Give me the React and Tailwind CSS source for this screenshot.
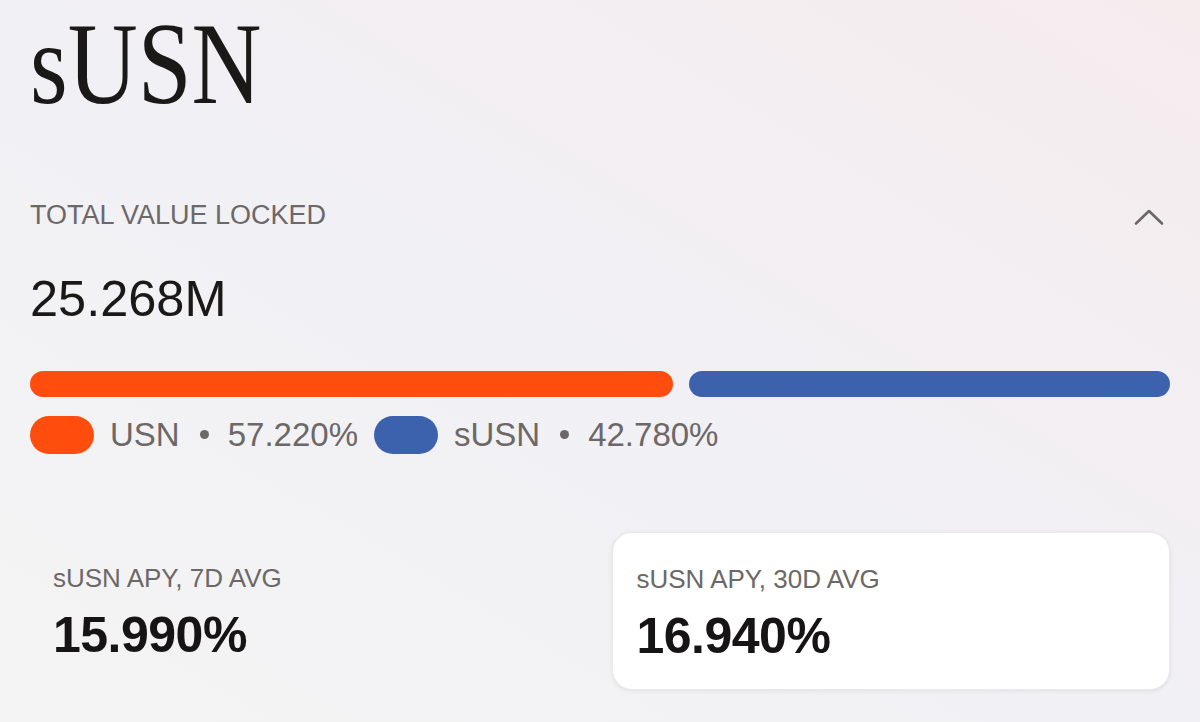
// App.jsx
import React from "react";

const sans = "font-['Liberation_Sans',Arial,sans-serif]";

const tvl = [
  { name: "USN", pct: 57.22, color: "bg-[#ff4d0d]" },
  { name: "sUSN", pct: 42.78, color: "bg-[#3d62ad]" },
];

function ChevronUp() {
  return (
    <svg width="30" height="18" viewBox="0 0 30 18" fill="none">
      <polyline
        points="2,15.5 15,3 28,15.5"
        stroke="#6a6767"
        strokeWidth="2.6"
        strokeLinecap="round"
        strokeLinejoin="round"
      />
    </svg>
  );
}

function Stat({ label, value, card }) {
  return (
    <div
      className={
        card
          ? "rounded-[20px] bg-white px-6 pt-[33px] pb-[28px] shadow-[0_1px_4px_rgba(0,0,0,0.08)] border border-[#ebe9ec]"
          : "px-[23px] pt-[33px] pb-[28px]"
      }
    >
      <p className="text-[26px] leading-none text-[#6c6868]">{label}</p>
      <p className="mt-[19px] text-[50px] leading-none font-bold text-[#161414] tracking-[-0.01em]">
        {value}
      </p>
    </div>
  );
}

export default function App() {
  return (
    <div
      className={`min-h-[722px] w-full bg-linear-to-bl from-[#f5ecee] via-[#f1f0f4] to-[#f4f4f4] px-[30px] ${sans}`}
    >
      {/* Title */}
      <h1 className="pt-[1px] h-[130px] font-['Liberation_Serif',serif] text-[116px] leading-[1.1] text-[#1b1918]">
        <span className="inline-block origin-left scale-x-[0.835]">sUSN</span>
      </h1>

      {/* TVL header */}
      <div className="mt-[72px] flex items-center justify-between">
        <p className="text-[27px] leading-none text-[#6c6868]">TOTAL VALUE LOCKED</p>
        <div className="mr-[6px] mt-[3px]">
          <ChevronUp />
        </div>
      </div>

      <p className="mt-[45px] text-[50.5px] leading-none text-[#1b1918]">25.268M</p>

      {/* Bar */}
      <div className="mt-[46px] flex gap-4">
        {tvl.map((t) => (
          <div key={t.name} className={`h-[26px] rounded-full ${t.color}`} style={{ flexGrow: t.pct, flexBasis: 0 }} />
        ))}
      </div>

      {/* Legend */}
      <div className="mt-[19px] flex items-center gap-4">
        {tvl.map((t) => (
          <div key={t.name} className="flex items-center">
            <span className={`h-[38px] w-[64px] rounded-full ${t.color}`} />
            <span className="ml-4 text-[33px] leading-none text-[#6c6868]">{t.name}</span>
            <span className="ml-[20px] mr-[19px] h-[9px] w-[9px] rounded-full bg-[#6c6868]" />
            <span className="text-[33px] leading-none text-[#6c6868]">{t.pct.toFixed(3)}%</span>
          </div>
        ))}
      </div>

      {/* APY */}
      <div className="mt-[78px] grid grid-cols-2 gap-[23px]">
        <Stat label="sUSN APY, 7D AVG" value="15.990%" />
        <Stat label="sUSN APY, 30D AVG" value="16.940%" card />
      </div>
    </div>
  );
}
